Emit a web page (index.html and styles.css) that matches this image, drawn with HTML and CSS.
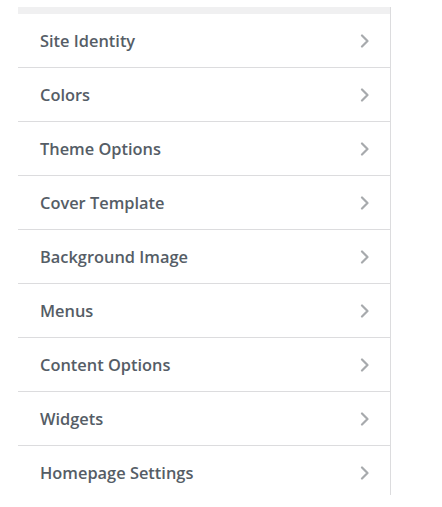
FILE: index.html
```html
<!DOCTYPE html>
<html>
<head>
<meta charset="utf-8">
<link rel="stylesheet" href="styles.css">
</head>
<body>
<div class="panel">
  <div class="strip"></div>
  <ul class="menu">
    <li class="item"><span class="label">Site Identity</span><svg class="chev" viewBox="0 0 10 14" width="10" height="14"><path d="M2 1.5 L7.5 7 L2 12.5" /></svg></li>
    <li class="item"><span class="label">Colors</span><svg class="chev" viewBox="0 0 10 14" width="10" height="14"><path d="M2 1.5 L7.5 7 L2 12.5" /></svg></li>
    <li class="item"><span class="label">Theme Options</span><svg class="chev" viewBox="0 0 10 14" width="10" height="14"><path d="M2 1.5 L7.5 7 L2 12.5" /></svg></li>
    <li class="item"><span class="label">Cover Template</span><svg class="chev" viewBox="0 0 10 14" width="10" height="14"><path d="M2 1.5 L7.5 7 L2 12.5" /></svg></li>
    <li class="item"><span class="label">Background Image</span><svg class="chev" viewBox="0 0 10 14" width="10" height="14"><path d="M2 1.5 L7.5 7 L2 12.5" /></svg></li>
    <li class="item"><span class="label">Menus</span><svg class="chev" viewBox="0 0 10 14" width="10" height="14"><path d="M2 1.5 L7.5 7 L2 12.5" /></svg></li>
    <li class="item"><span class="label">Content Options</span><svg class="chev" viewBox="0 0 10 14" width="10" height="14"><path d="M2 1.5 L7.5 7 L2 12.5" /></svg></li>
    <li class="item"><span class="label">Widgets</span><svg class="chev" viewBox="0 0 10 14" width="10" height="14"><path d="M2 1.5 L7.5 7 L2 12.5" /></svg></li>
    <li class="item"><span class="label">Homepage Settings</span><svg class="chev" viewBox="0 0 10 14" width="10" height="14"><path d="M2 1.5 L7.5 7 L2 12.5" /></svg></li>
  </ul>
</div>
</body>
</html>
```
FILE: styles.css
```css
html, body {
  margin: 0;
  padding: 0;
  background: #ffffff;
}
.panel {
  margin: 7px 0 0 18px;
  width: 372px;
  height: 488px;
  border-right: 1px solid #dcdcde;
  overflow: hidden;
}
.strip {
  height: 7px;
  background: #f0f0f1;
}
.menu {
  list-style: none;
  margin: 0;
  padding: 0;
}
.item {
  display: flex;
  align-items: center;
  justify-content: space-between;
  height: 53px;
  border-bottom: 1px solid #dcdcde;
  padding: 0 20px 0 22px;
  font-family: "Open Sans", "Noto Sans", sans-serif;
  font-weight: 600;
  font-size: 16.4px;
  color: #555d66;
}
.chev {
  display: block;
}
.chev path {
  fill: none;
  stroke: #a7aaad;
  stroke-width: 2.2;
  stroke-linecap: round;
  stroke-linejoin: round;
}
```
